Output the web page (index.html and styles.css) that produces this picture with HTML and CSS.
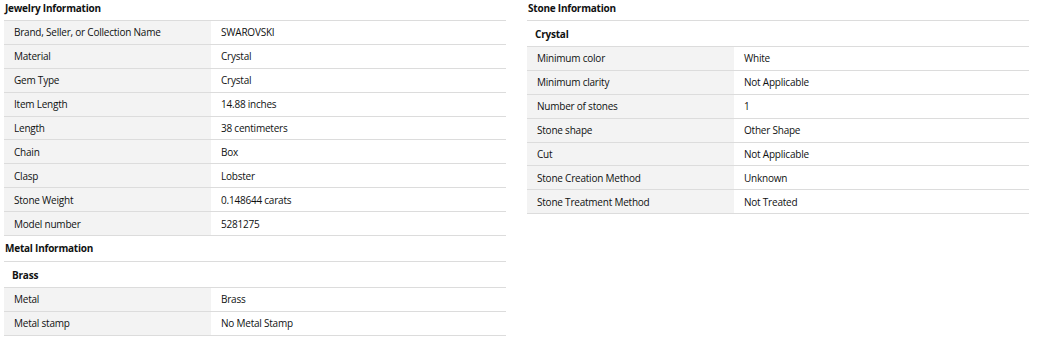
FILE: index.html
```html
<!DOCTYPE html>
<html>
<head>
<meta charset="utf-8">
<link rel="stylesheet" href="styles.css">
</head>
<body>
<div class="page">
  <div class="col">
    <div class="sec-title">Jewelry Information</div>
    <table class="spec">
      <tr><td class="k">Brand, Seller, or Collection Name</td><td class="v">SWAROVSKI</td></tr>
      <tr><td class="k">Material</td><td class="v">Crystal</td></tr>
      <tr><td class="k">Gem Type</td><td class="v">Crystal</td></tr>
      <tr><td class="k">Item Length</td><td class="v">14.88 inches</td></tr>
      <tr><td class="k">Length</td><td class="v">38 centimeters</td></tr>
      <tr><td class="k">Chain</td><td class="v">Box</td></tr>
      <tr><td class="k">Clasp</td><td class="v">Lobster</td></tr>
      <tr><td class="k">Stone Weight</td><td class="v">0.148644 carats</td></tr>
      <tr><td class="k">Model number</td><td class="v">5281275</td></tr>
    </table>
    <div class="sec-title sec-title-2">Metal Information</div>
    <table class="spec">
      <tr><td class="sub" colspan="2">Brass</td></tr>
      <tr><td class="k">Metal</td><td class="v">Brass</td></tr>
      <tr><td class="k">Metal stamp</td><td class="v">No Metal Stamp</td></tr>
    </table>
  </div>
  <div class="col">
    <div class="sec-title">Stone Information</div>
    <table class="spec">
      <tr><td class="sub" colspan="2">Crystal</td></tr>
      <tr><td class="k">Minimum color</td><td class="v">White</td></tr>
      <tr><td class="k">Minimum clarity</td><td class="v">Not Applicable</td></tr>
      <tr><td class="k">Number of stones</td><td class="v">1</td></tr>
      <tr><td class="k">Stone shape</td><td class="v">Other Shape</td></tr>
      <tr><td class="k">Cut</td><td class="v">Not Applicable</td></tr>
      <tr><td class="k">Stone Creation Method</td><td class="v">Unknown</td></tr>
      <tr><td class="k">Stone Treatment Method</td><td class="v">Not Treated</td></tr>
    </table>
  </div>
</div>
</body>
</html>
```

FILE: styles.css
```css
html, body {
  margin: 0;
  padding: 0;
  background: #ffffff;
}
body {
  font-family: "Open Sans", "Noto Sans", Arial, sans-serif;
  font-size: 10px;
  letter-spacing: -0.22px;
  color: #0f1111;
}
.page {
  display: flex;
  gap: 21px;
  padding: 0 4px;
}
.col {
  width: 502px;
}
.sec-title {
  font-weight: 700;
  height: 20px;
  line-height: 16px;
  padding-left: 1px;
}
.sec-title-2 {
  height: 25px;
  line-height: 25px;
}
.spec {
  width: 100%;
  border-collapse: collapse;
  border-top: 1px solid #dcdcdc;
}
.spec td {
  height: 22.9px;
  padding: 0 10px;
  border-bottom: 1px solid #dcdcdc;
  vertical-align: middle;
  white-space: nowrap;
}
.spec td.k {
  width: 187px;
  background: #f3f3f3;
}
.spec td.sub {
  font-weight: 700;
  height: 25px;
  padding-left: 8px;
}
```
